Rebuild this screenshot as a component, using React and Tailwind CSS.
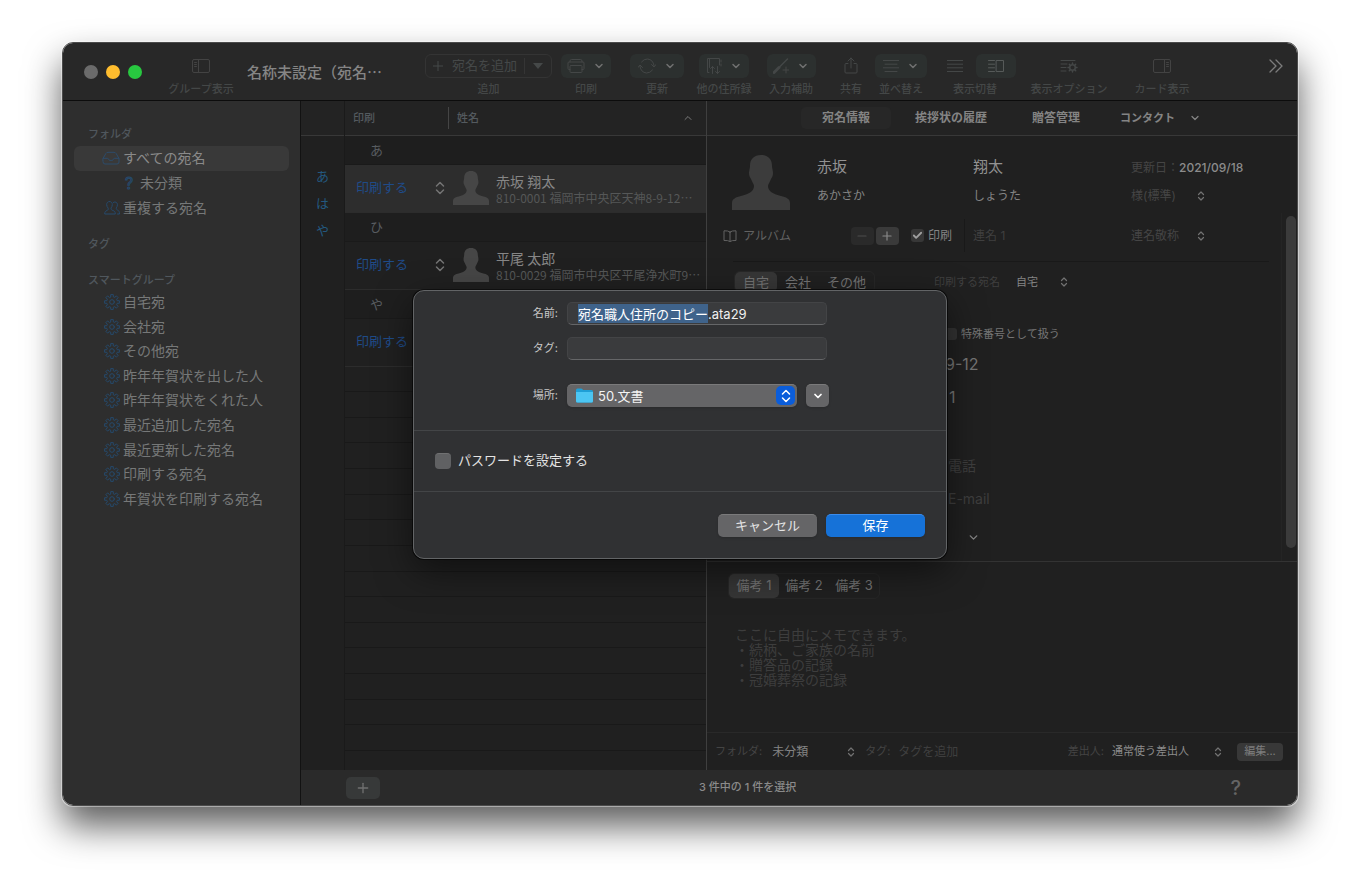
import React, { useEffect, useRef, useState } from 'react';
import { ChevronDown, ChevronUp, Check, Minus, Plus } from 'lucide-react';
import clsx from 'clsx';

const SMART_GROUPS = [
  '自宅宛',
  '会社宛',
  'その他宛',
  '昨年年賀状を出した人',
  '昨年年賀状をくれた人',
  '最近追加した宛名',
  '最近更新した宛名',
  '印刷する宛名',
  '年賀状を印刷する宛名',
];

const PEOPLE = [
  { kana: 'あ', name: '赤坂 翔太', address: '810-0001 福岡市中央区天神8-9-12…', selected: true },
  { kana: 'ひ', name: '平尾 太郎', address: '810-0029 福岡市中央区平尾浄水町9…' },
  { kana: 'や', name: '', address: '' },
];

const MEMO_HINT = 'ここに自由にメモできます。\n・続柄、ご家族の名前\n・贈答品の記録\n・冠婚葬祭の記録';

const FILE_NAME = '宛名職人住所のコピー.ata29';

// outline of an eight-toothed gear
function gearPath(c, outer, inner) {
  const pts = [];
  for (let i = 0; i < 8; i++) {
    const a = (i * Math.PI) / 4;
    [[-0.24, inner], [-0.17, outer], [0.17, outer], [0.24, inner]].forEach(([d, r]) => {
      pts.push(`${(c + r * Math.sin(a + d)).toFixed(2)} ${(c - r * Math.cos(a + d)).toFixed(2)}`);
    });
  }
  return `M${pts.join('L')}Z`;
}

function Icon({ className, w = 16, h = 16, children }) {
  return (
    <svg
      className={clsx('shrink-0', className)}
      width={w}
      height={h}
      viewBox={`0 0 ${w} ${h}`}
      fill="none"
      stroke="currentColor"
      strokeLinecap="round"
      strokeLinejoin="round"
      aria-hidden="true"
    >
      {children}
    </svg>
  );
}

const GearIcon = () => (
  <Icon className="text-[#264a6c]">
    <path d={gearPath(8, 7.5, 5.4)} />
    <circle cx="8" cy="8" r="2.3" />
  </Icon>
);

const TrayIcon = () => (
  <Icon w={18} className="text-[#2d4c6b]">
    <path d="M1 8.5 3.8 3.6Q4.6 2.3 6 2.3h6q1.4 0 2.2 1.3L17 8.5V12q0 2-2 2H3q-2 0-2-2Z" />
    <path d="M1.2 8.3h4.3q.8 0 1 .8.4 1.3 1.6 1.3h1.8q1.2 0 1.6-1.3.2-.8 1-.8h4.3" />
  </Icon>
);

const PeopleIcon = () => (
  <Icon className="text-[#264a6c]">
    <path d="M5.5 1.5c1.8 0 2.8 1.3 2.8 3.1 0 1.5-.6 2.6-1.2 3.3-.4 1.5.3 2 1.8 2.6 1.6.6 2.4 1.3 2.4 3.5H.7c0-2.2.8-2.9 2.3-3.5 1.3-.6 1.5-1.3 1-2.6-.7-.7-1.3-1.8-1.3-3.3 0-1.8 1-3.1 2.8-3.1Z" />
    <path d="M9.3 2.6c.4-.4 1-.6 1.6-.6 1.6 0 2.5 1.2 2.5 2.8 0 1.3-.5 2.3-1.1 3-.3 1.3.3 1.8 1.3 2.3 1.3.6 1.9 1.7 1.9 3.9h-2" />
  </Icon>
);

const Avatar = ({ className }) => (
  <svg className={clsx('shrink-0', className)} viewBox="0 0 58 55" fill="currentColor" aria-hidden="true">
    <path d="M29 0C36 0 40 4 40 11C40 13 41 16 41 18C41 21 40 22 39 24C38 27 36 29 36 31C36 37 42 39 49 41C54 42 58 44 58 48V55H0V48C0 44 4 42 9 41C16 39 22 37 22 31C22 29 20 27 19 24C18 22 17 21 17 18C17 16 18 13 18 11C18 4 22 0 29 0Z" />
  </svg>
);

const UpDown = ({ className }) => (
  <Icon w={10} h={14} className={className}>
    <path d="M1.5 5 5 1.5 8.5 5M1.5 9 5 12.5 8.5 9" strokeWidth="1.5" />
  </Icon>
);

const SmallUpDown = ({ className }) => (
  <Icon w={8} h={10} className={className}>
    <path d="M1.5 3.5 4 1 6.5 3.5M1.5 6.5 4 9 6.5 6.5" strokeWidth="1.2" />
  </Icon>
);

// native select without its arrow, the stepper glyph sits on the right edge
function Popup({ label, value, className, textClass }) {
  return (
    <span className={clsx('relative inline-flex items-center', className)}>
      <select aria-label={label} className={clsx('w-full appearance-none bg-transparent outline-none', textClass)}>
        <option>{value}</option>
      </select>
      <SmallUpDown className="pointer-events-none absolute right-0 text-[#727272]" />
    </span>
  );
}

function ToolItem({ label, className, children }) {
  return (
    <div className={clsx('flex shrink-0 flex-col items-center gap-[3px]', className)}>
      <div className="flex h-6 w-full items-center justify-center">{children}</div>
      <span className="text-[11px] leading-4 font-medium whitespace-nowrap text-[#444747]">{label}</span>
    </div>
  );
}

function MenuButton({ label, className, children }) {
  return (
    <button
      aria-label={label}
      className={clsx('flex h-6 items-center justify-center gap-2 rounded-md bg-[#2c302f] text-[#444747]', className)}
    >
      {children}
      <ChevronDown size={12} strokeWidth={3} className="text-[#707070]" />
    </button>
  );
}

function Toolbar() {
  return (
    <header className="flex h-[58px] items-start border-b border-black/70 bg-[#282828] pt-[11px] pr-3.5 pl-[21px]">
      <div className="flex w-[83px] items-center gap-2 pt-[11px]">
        <button aria-label="閉じる" className="size-[14px] rounded-full bg-[#6b6b6b]" />
        <button aria-label="しまう" className="size-[14px] rounded-full bg-[#ffbd2e]" />
        <button aria-label="拡大" className="size-[14px] rounded-full bg-[#28c840]" />
      </div>
      <ToolItem label="グループ表示" className="w-[68px]">
        <button aria-label="グループ表示" className="text-[#434343]">
          <Icon w={18}>
            <rect x="0.5" y="1.5" width="17" height="13" rx="1.5" />
            <path d="M6.5 1.5v13M2.5 4.5h2M2.5 6.5h2M2.5 8.5h2" />
          </Icon>
        </button>
      </ToolItem>
      <h1 className="w-[190px] shrink-0 pt-1.5 pl-3 font-['Noto_Sans_CJK_JP',sans-serif] text-[15px] leading-6 font-medium whitespace-nowrap text-[#858585]">
        名称未設定（宛名…
      </h1>
      <ToolItem label="追加" className="w-[127px]">
        <div className="flex h-6 w-full items-center rounded-md border border-[#343434] text-[#454848]">
          <button className="flex flex-1 items-center gap-1.5 pl-1 text-[13px] whitespace-nowrap">
            <Plus size={16} strokeWidth={1.5} />
            宛名を追加
          </button>
          <span className="h-4 w-px bg-[#353535]" />
          <button aria-label="追加メニュー" className="flex w-[26px] justify-center">
            <Icon w={10} h={6}>
              <path d="M0 0h10L5 6Z" fill="currentColor" stroke="none" />
            </Icon>
          </button>
        </div>
      </ToolItem>
      <ToolItem label="印刷" className="w-[68px]">
        <MenuButton label="印刷" className="w-[50px]">
          <Icon w={18} h={14}>
            <path d="M3 3V2Q3 .5 4.5.5h9Q15 .5 15 2v1M3 10.5H2q-1 0-1-1V4q0-1 1-1h14q1 0 1 1v5.5q0 1-1 1h-1" />
            <rect x="3" y="6.5" width="12" height="7" rx="1" />
          </Icon>
        </MenuButton>
      </ToolItem>
      <ToolItem label="更新" className="w-[74px]">
        <MenuButton label="更新" className="w-[54px]">
          <Icon w={18} h={16}>
            <path d="M3.5 4Q6 .8 9.5 1q5.5.5 6.5 6.500M14.500 12Q12 15.200 8.500 15 3 14.500 2 8.500M0 9.500 2 7l2.500 2.500M13.500 6.500 16 9l2-2.500" />
          </Icon>
        </MenuButton>
      </ToolItem>
      <ToolItem label="他の住所録" className="w-[60px]">
        <MenuButton label="他の住所録" className="w-[50px]">
          <Icon w={16} h={18}>
            <path d="M3 15.5H1.5V1.5H13.5V8M15 3v2M15 7v2M3.500 1.500v9M6.500 16.500v-7M4.500 11.500l2-2 2 2M11.500 9.500v7M9.500 14.500l2 2 2-2" />
          </Icon>
        </MenuButton>
      </ToolItem>
      <ToolItem label="入力補助" className="w-[74px]">
        <MenuButton label="入力補助" className="w-[49px]">
          <Icon w={16} h={16}>
            <path d="M7 8.5 14.5 1" strokeWidth="1.5" />
            <path d="M1 14.5 6 9.5" strokeWidth="3" />
            <path d="M13 9v6M10 12h6" />
          </Icon>
        </MenuButton>
      </ToolItem>
      <ToolItem label="共有" className="w-[46px]">
        <button aria-label="共有" className="text-[#444747]">
          <Icon w={14} h={18}>
            <path d="M4 6.5H2Q1 6.5 1 7.5V15q0 1 1 1h10q1 0 1-1V7.5q0-1-1-1h-2M7 11V1M4 4l3-3 3 3" />
          </Icon>
        </button>
      </ToolItem>
      <ToolItem label="並べ替え" className="w-[54px]">
        <MenuButton label="並べ替え" className="w-[52px]">
          <Icon w={16} h={12}>
            <path d="M0 .5h16M2 4.2h12M0 7.8h16M2 11.5h12" />
          </Icon>
        </MenuButton>
      </ToolItem>
      <ToolItem label="表示切替" className="w-[94px]">
        <button aria-label="リスト表示" className="flex w-[42px] justify-center text-[#444747]">
          <Icon w={16} h={12}>
            <path d="M0 .5h16M0 4.2h16M0 7.8h16M0 11.5h16" />
          </Icon>
        </button>
        <button
          aria-label="詳細表示"
          className="flex h-6 w-10 items-center justify-center rounded-md bg-[#2c302f] text-[#565a59]"
        >
          <Icon w={16} h={12}>
            <path d="M.5 .5h6M.5 4.2h6M.5 7.8h6M.5 11.5h6" />
            <rect x="8.5" y="0.5" width="7" height="11" />
          </Icon>
        </button>
      </ToolItem>
      <ToolItem label="表示オプション" className="w-[94px]">
        <button aria-label="表示オプション" className="text-[#444747]">
          <Icon w={18} h={14}>
            <path d="M1 1.5h14M1 5h6M1 8.5h5M1 12h5" />
            <circle cx="12.5" cy="8.5" r="2.8" strokeWidth="1.5" />
            <path d="M12.5 4v1M12.5 12v1M8 8.5h1M16 8.5h1M9.3 5.3l.7.7M15 11l.7.7M15.7 5.3l-.7.7M10 11l-.7.7" strokeWidth="1.5" />
          </Icon>
        </button>
      </ToolItem>
      <ToolItem label="カード表示" className="w-[92px]">
        <button aria-label="カード表示" className="text-[#434343]">
          <Icon w={18}>
            <rect x="0.5" y="1.5" width="17" height="13" rx="1.5" />
            <path d="M11.5 1.5v13M13.5 4.5h2M13.5 6.5h2M13.5 8.5h2" />
          </Icon>
        </button>
      </ToolItem>
      <button aria-label="その他の項目" className="ml-auto text-[#7c7c7c]">
        <Icon w={14} h={24}>
          <path d="M1 6 7 12 1 18M7 6l6 6-6 6" strokeWidth="1.3" />
        </Icon>
      </button>
    </header>
  );
}

function SideItem({ icon, label, selected, className }) {
  return (
    <button
      className={clsx(
        'flex w-full items-center gap-[3px] rounded-md text-left text-[14px] leading-5 whitespace-nowrap',
        selected ? 'bg-[#393939] text-[#8a8a8a]' : 'text-[#767878]',
        className,
      )}
    >
      {icon}
      {label}
    </button>
  );
}

function Sidebar() {
  return (
    <nav className="w-[238px] shrink-0 border-r border-black/60 bg-[#2e2e2e] px-[11px] pt-[25px] text-[11px] font-medium text-[#50575d]">
      <h2 className="pl-[14px] leading-4">フォルダ</h2>
      <div className="mt-1 grid h-[74px] auto-rows-fr font-normal">
        <SideItem selected icon={<TrayIcon />} label="すべての宛名" className="pl-[28px]" />
        <SideItem
          icon={
            <span className="w-4 text-center text-[16px] text-transparent [-webkit-text-stroke:1px_#264a6c]">?</span>
          }
          label="未分類"
          className="pl-[47px]"
        />
        <SideItem icon={<PeopleIcon />} label="重複する宛名" className="pl-[30px]" />
      </div>
      <h2 className="mt-4 pl-[14px] leading-4">タグ</h2>
      <h2 className="mt-5 pl-[14px] leading-4">スマートグループ</h2>
      <div className="mt-0.5 grid h-[221px] auto-rows-fr font-normal">
        {SMART_GROUPS.map(label => (
          <SideItem key={label} icon={<GearIcon />} label={label} className="pl-[30px]" />
        ))}
      </div>
    </nav>
  );
}

function KanaIndex() {
  return (
    <div className="flex w-11 shrink-0 flex-col border-r border-[#1a1a1a] bg-[#202020]">
      <div className="h-[35px] border-b border-[#383838] bg-[#232323]" />
      <div className="flex flex-col items-center gap-[2px] pt-7 text-[13px] leading-6 text-[#23587f]">
        {['あ', 'は', 'や'].map(k => (
          <a key={k} href={`#${k}`} className="h-[25px]">{k}</a>
        ))}
      </div>
    </div>
  );
}

function AddressList() {
  return (
    <div className="flex w-[362px] shrink-0 flex-col overflow-hidden border-r border-[#3f3f3f] bg-[#202020]">
      <table className="w-full table-fixed border-collapse text-left">
        <colgroup>
          <col className="w-[103px]" />
          <col />
        </colgroup>
        <thead className="text-[11px] text-[#545a5f]">
          <tr className="h-[34px] border-b border-[#383838] bg-[#232323]">
            <th className="pl-2 font-medium">印刷</th>
            <th className="font-medium">
              <div className="flex h-[22px] items-center justify-between border-l border-[#454545] pr-3 pl-2">
                姓名
                <ChevronUp size={12} strokeWidth={2} className="text-[#7a7a7a]" />
              </div>
            </th>
          </tr>
        </thead>
        <tbody>
          {PEOPLE.map(p => (
            <React.Fragment key={p.kana}>
              <tr className="h-[29px] border-b border-[#1a1a1a] bg-[#1e1e1e]">
                <td colSpan={2} id={p.kana} className="pl-[25px] text-[13px] leading-5 text-[#585c60]">
                  {p.kana}
                </td>
              </tr>
              <tr className={clsx('h-12 border-b border-[#2c2c2c]', p.selected ? 'bg-[#2d2d2d]' : 'bg-[#202020]')}>
                <td className="pr-[3px] pl-[11px]">
                  <div className="flex items-center justify-between">
                    <button className="text-[13px] text-[#1f4b88]">印刷する</button>
                    <UpDown className="text-[#747474]" />
                  </div>
                </td>
                <td className="pl-[5px]">
                  <div className="flex items-center gap-[7px]">
                    <Avatar className="w-9 text-[#464646]" />
                    <div className="min-w-0 pt-0.5 font-['Noto_Sans_CJK_JP',sans-serif] whitespace-nowrap">
                      <div className="text-[14px] leading-[18px] text-[#868686]">{p.name}</div>
                      <div className="text-[12px] leading-4 text-[#555757]">{p.address}</div>
                    </div>
                  </div>
                </td>
              </tr>
            </React.Fragment>
          ))}
        </tbody>
      </table>
      {/* blank rows down to the footer */}
      <div className="min-h-0 flex-[1_1_0px] overflow-hidden contain-size">
        <div className="grid h-[410px] auto-rows-fr">
          {Array.from({ length: 16 }, (_, i) => (
            <div key={i} className="border-b border-[#191919]" />
          ))}
        </div>
      </div>
    </div>
  );
}

function Segments({ items, className, itemClass }) {
  const [active, setActive] = useState(items[0]);
  return (
    <div className={clsx('inline-flex rounded-md border border-[#272727] text-[#747474]', className)}>
      {items.map(item => (
        <button
          key={item}
          onClick={() => setActive(item)}
          className={clsx('rounded-[5px] whitespace-nowrap', itemClass, active === item && 'bg-[#363636]')}
        >
          {item}
        </button>
      ))}
    </div>
  );
}

const GRID = 'grid grid-cols-[110px_156px_158px_1fr]';

function DetailForm() {
  return (
    <section className="relative h-[426px] shrink-0 border-b border-[#333] text-[12px] leading-5 text-[#848484]">
      <div className={clsx(GRID, 'items-baseline gap-y-[3px] pt-[19px]')}>
        <Avatar className="row-span-2 ml-[25px] w-[58px] self-start text-[#3c3c3c]" />
        <span className="text-[15px] leading-6 text-[#929292]">赤坂</span>
        <span className="text-[15px] leading-6 text-[#929292]">翔太</span>
        <span className="whitespace-nowrap text-[#454545]">
          更新日：<span className="font-medium text-[#8c8c8c]">2021/09/18</span>
        </span>
        <span>あかさか</span>
        <span>しょうた</span>
        <Popup label="敬称" value="様(標準)" className="w-[74px]" textClass="text-[#454545]" />
      </div>
      <div className={clsx(GRID, 'mt-[9px] h-[33px] items-center')}>
        <div className="col-span-2 mr-2 flex h-full items-center border-r border-[#191919] pl-4">
          <button className="flex items-center gap-1.5 text-[#626262]">
            <Icon w={14} h={12}>
              <path d="M7 2Q5 .5 1 .8v9.7q4-.3 6 1 2-1.3 6-1V.8Q9 .5 7 2Zm0 0v9.5" />
            </Icon>
            アルバム
          </button>
          <div className="ml-auto flex gap-[2px] pr-3 text-[#8a8a8a]">
            <button aria-label="連名を削除" className="flex h-[18px] w-[23px] items-center justify-center rounded bg-[#2a2a2a] text-[#4c4c4c]">
              <Minus size={14} strokeWidth={2} />
            </button>
            <button aria-label="連名を追加" className="flex h-[18px] w-[23px] items-center justify-center rounded bg-[#3a3a3a]">
              <Plus size={14} strokeWidth={2} />
            </button>
          </div>
          <label className="flex items-center gap-1 pr-3">
            <span className="relative flex">
              <input type="checkbox" defaultChecked className="size-[13px] appearance-none rounded-[3px] bg-[#373737]" />
              <Check size={11} strokeWidth={4} className="pointer-events-none absolute top-px left-px text-[#a0a0a0]" />
            </span>
            印刷
          </label>
        </div>
        <input aria-label="連名 1" placeholder="連名 1" className="w-32 bg-transparent outline-none placeholder:text-[#3f3f3f]" />
        <Popup label="連名敬称" value="連名敬称" className="w-[74px]" textClass="text-[#454545]" />
      </div>
      <hr className="mt-[9px] mr-7 ml-[26px] border-[#191919]" />
      <div className="mt-[9px] flex h-[22px] items-center pl-[27px]">
        <Segments items={['自宅', '会社', 'その他']} className="text-[13px]" itemClass="h-5 px-2" />
        <span className="ml-auto w-[363px] text-[11px] text-[#3f3f3f]">
          印刷する宛名
          <Popup label="印刷する宛名" value="自宅" className="ml-4 w-[52px]" textClass="text-[11px] text-[#848484]" />
        </span>
      </div>
      <div className="mt-[25px] pl-[238px] text-[14px] text-[#3e3e3e]">
        <label className="flex h-8 items-center gap-1 text-[11px] text-[#767676]">
          <input type="checkbox" className="size-3 appearance-none rounded-[3px] bg-[#333]" />
          特殊番号として扱う
        </label>
        <p className="flex h-7 items-center text-[16px] text-[#747474]">9-12</p>
        <p className="flex h-[38px] items-center pl-1 text-[16px] text-[#747474]">1</p>
        <div className="mt-8 flex h-9 items-center pl-[3px]">電話</div>
        <div className="flex h-[30px] items-center pl-[3px]">E-mail</div>
        <button aria-label="項目を追加" className="flex h-[46px] items-center pl-[22px] text-[#848484]">
          <ChevronDown size={13} strokeWidth={2.5} />
        </button>
      </div>
      <div className="absolute top-[77px] right-0 bottom-0 w-4 border-l border-[#242424]">
        <div className="mt-[3px] ml-1 h-[332px] w-2.5 rounded-full bg-[#3b3b3b]" />
      </div>
    </section>
  );
}

function DetailPane() {
  return (
    <main className="flex min-w-0 flex-1 flex-col bg-[#202020]">
      <div className="flex h-[35px] shrink-0 items-center gap-[15px] border-b border-[#383838] bg-[#232323] pl-[94px] text-[12px] font-bold whitespace-nowrap text-[#848484]">
        <button className="h-[22px] w-[90px] rounded-[5px] bg-[#272727]">宛名情報</button>
        <button className="h-[22px] w-[90px]">挨拶状の履歴</button>
        <button className="h-[22px] w-[90px]">贈答管理</button>
        <button className="flex h-[22px] items-center gap-[14px] pl-1 text-[11px]">
          コンタクト
          <ChevronDown size={12} strokeWidth={2.5} />
        </button>
      </div>
      <DetailForm />
      <section className="flex flex-1 flex-col px-[21px] pt-[11px]">
        <Segments items={['備考 1', '備考 2', '備考 3']} className="self-start text-[13px]" itemClass="h-6 w-[50px]" />
        <textarea
          aria-label="備考"
          placeholder={MEMO_HINT}
          className="mt-7 w-full flex-1 resize-none bg-transparent pl-[7px] text-[14px] leading-[15px] outline-none placeholder:text-[#3d3d3d]"
        />
      </section>
      <div className="flex h-[38px] shrink-0 items-center border-t border-[#292929] pr-3.5 pl-2 text-[11px] whitespace-nowrap text-[#444]">
        フォルダ:
        <Popup label="フォルダ" value="未分類" className="ml-2.5 w-[83px]" textClass="text-[12px] text-[#848484]" />
        <label htmlFor="tags" className="ml-2.5">タグ:</label>
        <input
          id="tags"
          placeholder="タグを追加"
          className="ml-2 w-20 min-w-0 bg-transparent text-[12px] outline-none placeholder:text-[#3f3f3f]"
        />
        <span className="ml-auto">差出人:</span>
        <Popup label="差出人" value="通常使う差出人" className="ml-2 w-[110px]" textClass="text-[11px] text-[#8c8c8c]" />
        <button className="ml-[15px] h-[18px] w-[46px] rounded bg-[#383838] text-[#7e7e7e]">編集...</button>
      </div>
    </main>
  );
}

function SaveDialog() {
  const nameRef = useRef(null);

  useEffect(() => {
    nameRef.current.focus();
    nameRef.current.setSelectionRange(0, FILE_NAME.indexOf('.'));
  }, []);

  const field =
    'h-[23px] w-[260px] rounded-[5px] border border-[#434446] border-b-[#656668] bg-[#3a3b3d] pl-2.5 text-[13px] text-[#f0f0f0] outline-none selection:bg-[#3f638b] selection:text-white';

  return (
    <div
      role="dialog"
      aria-label="保存"
      className="absolute top-[247px] left-1/2 w-[534px] -translate-x-1/2 rounded-[11px] border border-[#626466] bg-[#303133] text-[13px] text-[#e4e4e4] shadow-[0_0_0_1px_rgba(0,0,0,0.6),0_12px_36px_rgba(0,0,0,0.5)]"
    >
      <div className="grid grid-cols-[144px_1fr] items-center gap-x-[9px] border-b border-[#434547] pt-[11px] pb-[23px]">
        <label htmlFor="file-name" className="text-right text-[11px] text-[#c8c8c8]">名前:</label>
        <input id="file-name" ref={nameRef} defaultValue={FILE_NAME} className={field} />
        <label htmlFor="file-tags" className="mt-3 text-right text-[11px] text-[#c8c8c8]">タグ:</label>
        <input id="file-tags" className={clsx(field, 'mt-3')} />
        <label htmlFor="place" className="mt-6 text-right text-[11px] text-[#c8c8c8]">場所:</label>
        <div className="mt-6 flex gap-[9px]">
          <div className="relative flex items-center">
            <select
              id="place"
              className="h-[23px] w-[230px] appearance-none rounded-[5px] border-t border-[#7a7a7b] bg-[#656567] pl-[31px] text-[13px] leading-5 text-[#f4f4f4] shadow outline-none"
            >
              <option>50.文書</option>
            </select>
            <svg className="pointer-events-none absolute left-[9px]" width="17" height="15" viewBox="0 0 17 15" aria-hidden="true">
              <path d="M0 2Q0 .5 1.5.5H5q.8 0 1.3.6l.7.9h8.500Q17 2 17 3.500V13q0 1.500-1.500 1.500h-14Q0 14.500 0 13Z" fill="#1f9fd6" />
              <path d="M0 4h17v9q0 1.500-1.500 1.500h-14Q0 14.500 0 13Z" fill="#4cc6f3" />
            </svg>
            <span className="pointer-events-none absolute right-0.5 flex size-[19px] items-center justify-center rounded-[5px] bg-[#0a5ddb] text-white">
              <UpDown />
            </span>
          </div>
          <button aria-label="詳細を表示" className="flex h-[23px] w-[23px] items-center justify-center rounded-[5px] border-t border-[#7a7a7b] bg-[#656567] text-white shadow">
            <ChevronDown size={12} strokeWidth={3.5} />
          </button>
        </div>
      </div>
      <label className="flex h-[61px] items-center gap-[7px] border-b border-[#434547] pl-[21px]">
        <input type="checkbox" className="size-4 appearance-none rounded-[4px] border-t border-[#707172] bg-[#606163]" />
        パスワードを設定する
      </label>
      <div className="flex justify-end gap-[9px] pt-[22px] pr-[21px] pb-[21px]">
        <button className="h-[23px] w-[99px] rounded-[5px] border-t border-[#7a7a7b] bg-[#656567] pb-0.5 leading-5 shadow">キャンセル</button>
        <button className="h-[23px] w-[99px] rounded-[5px] border-t border-[#3b8cec] bg-[#1672d8] pb-0.5 leading-5 text-white shadow">保存</button>
      </div>
    </div>
  );
}

export default function App() {
  return (
    <div className="flex min-h-screen bg-white px-[62px] pt-[42px] pb-[82px] font-['Inter','Noto_Sans_CJK_JP',sans-serif]">
      <div className="relative flex min-w-0 flex-1 flex-col rounded-[11px] border border-[#4b4b4b] shadow-[0_0_0_1px_rgba(255,255,255,0.4),0_20px_36px_rgba(0,0,0,0.64)]">
        <div className="flex flex-1 flex-col overflow-hidden rounded-[10px]">
          <Toolbar />
          <div className="flex flex-1">
            <Sidebar />
            <div className="flex min-w-0 flex-1 flex-col">
              <div className="flex flex-1">
                <KanaIndex />
                <AddressList />
                <DetailPane />
              </div>
              <footer className="flex h-[35px] shrink-0 items-center bg-[#2a2a2a] pr-14 pl-[45px] text-[#8a8a8a]">
                <button aria-label="宛名を追加" className="flex h-[22px] w-[34px] items-center justify-center rounded-[5px] bg-[#373939] text-[#707070]">
                  <Plus size={16} strokeWidth={2} />
                </button>
                <span className="ml-[319px] text-[11px] font-medium">3 件中の 1 件を選択</span>
                <button aria-label="ヘルプ" className="ml-auto text-[20px] leading-6 font-medium text-[#646464]">?</button>
              </footer>
            </div>
          </div>
        </div>
        <SaveDialog />
      </div>
    </div>
  );
}
